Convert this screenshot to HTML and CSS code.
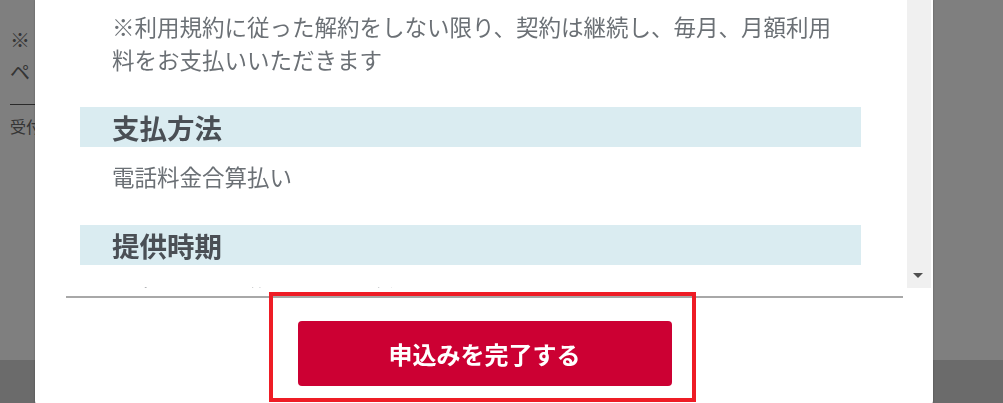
FILE: index.html
```html
<!DOCTYPE html>
<html lang="ja">

<head>
	<meta charset="UTF-8">
	<title>お申込み内容の確認</title>
	<link rel="stylesheet" href="styles.css">
</head>

<body>
	<div class="page">
		<div class="page-main">
			<p class="page-note">※ お申込み内容をご確認のうえ、お手続きを進めてください。<br>ペ ージを閉じるとお申込みは完了しません。</p>
			<div class="page-rule"></div>
			<p class="page-small">受付時間：24時間</p>
		</div>
		<div class="page-foot"></div>
	</div>

	<div class="overlay"></div>

	<div class="modal">
		<div class="modal-body">
			<div class="scroll-content">
				<p class="note">※利用規約に従った解約をしない限り、契約は継続し、毎月、月額利用料をお支払いいただきます</p>

				<h2 class="sec-title">支払方法</h2>
				<p class="sec-text">電話料金合算払い</p>

				<h2 class="sec-title">提供時期</h2>
				<p class="sec-text sec-text-last">お申込み完了後、すぐにご利用いただけます</p>
			</div>
			<div class="scrollbar">
				<span class="arrow-down"></span>
			</div>
		</div>
		<div class="modal-foot">
			<button type="button" class="btn-submit">申込みを完了する</button>
		</div>
		<div class="highlight"></div>
	</div>
</body>

</html>
```

FILE: styles.css
```css
html,
body {
	margin: 0;
	padding: 0;
	height: 100%;
	overflow: hidden;
}

body {
	font-family: "Noto Sans CJK JP", "Noto Sans", sans-serif;
	background: #fff;
}

p,
h2 {
	margin: 0;
}

/* background page */
.page {
	height: 100%;
	display: flex;
	flex-direction: column;
}

.page-main {
	flex: 1;
	padding: 24px 0 0 10px;
	color: #6a6a6a;
}

.page-note {
	font-size: 20px;
	line-height: 32px;
	white-space: nowrap;
}

.page-rule {
	margin-top: 16px;
	border-top: 1px solid #555;
	width: 600px;
}

.page-small {
	margin-top: 9px;
	font-size: 16px;
	line-height: 24px;
	white-space: nowrap;
}

.page-foot {
	height: 43px;
	background: #d6d6d6;
}

.overlay {
	position: fixed;
	top: 0;
	left: 0;
	right: 0;
	bottom: 0;
	background: rgba(0, 0, 0, 0.5);
}

/* modal */
.modal {
	position: fixed;
	top: 0;
	left: 35px;
	width: 898px;
	height: 407px;
	background: #fff;
	border-radius: 0 0 6px 6px;
	box-shadow: 0 0 2px rgba(0, 0, 0, 0.35);
}

.modal-body {
	display: flex;
	height: 288px;
	padding-left: 31px;
	padding-right: 2px;
}

.scroll-content {
	flex: 1;
	overflow: hidden;
	padding: 10px 46px 0 14px;
}

.note {
	padding: 0 20px 0 32px;
	font-size: 22.5px;
	line-height: 33px;
	color: #6b7075;
}

.sec-title {
	margin-top: 31px;
	height: 40px;
	padding-left: 32px;
	background: #daecf1;
	font-size: 27.5px;
	line-height: 40px;
	font-weight: bold;
	color: #4a4f55;
}

.sec-text {
	margin-top: 13px;
	padding-left: 32px;
	font-size: 22.5px;
	line-height: 33px;
	color: #6b7075;
	white-space: nowrap;
}

.sec-text-last {
	margin-top: 16px;
}

.sec-text + .sec-title {
	margin-top: 32px;
}

.scrollbar {
	position: relative;
	width: 24px;
	background: #f0f0f0;
}

.arrow-down {
	position: absolute;
	left: 6px;
	bottom: 10px;
	width: 0;
	height: 0;
	border-left: 5px solid transparent;
	border-right: 5px solid transparent;
	border-top: 5px solid #505050;
}

.modal-foot {
	margin: 8px 30px 0 31px;
	padding-top: 23px;
	border-top: 2px solid #a8a8a8;
}

.btn-submit {
	display: block;
	width: 374px;
	height: 65px;
	margin: 0 auto;
	border: 0;
	border-radius: 4px;
	background: #cc0033;
	color: #fff;
	font-family: "Noto Sans CJK JP", "Noto Sans", sans-serif;
	font-size: 24px;
	font-weight: bold;
	cursor: pointer;
}

/* annotation box around the footer button */
.highlight {
	position: absolute;
	left: 234px;
	top: 292px;
	width: 427px;
	height: 110px;
	box-sizing: border-box;
	border: 4px solid #ee1c25;
}
```
